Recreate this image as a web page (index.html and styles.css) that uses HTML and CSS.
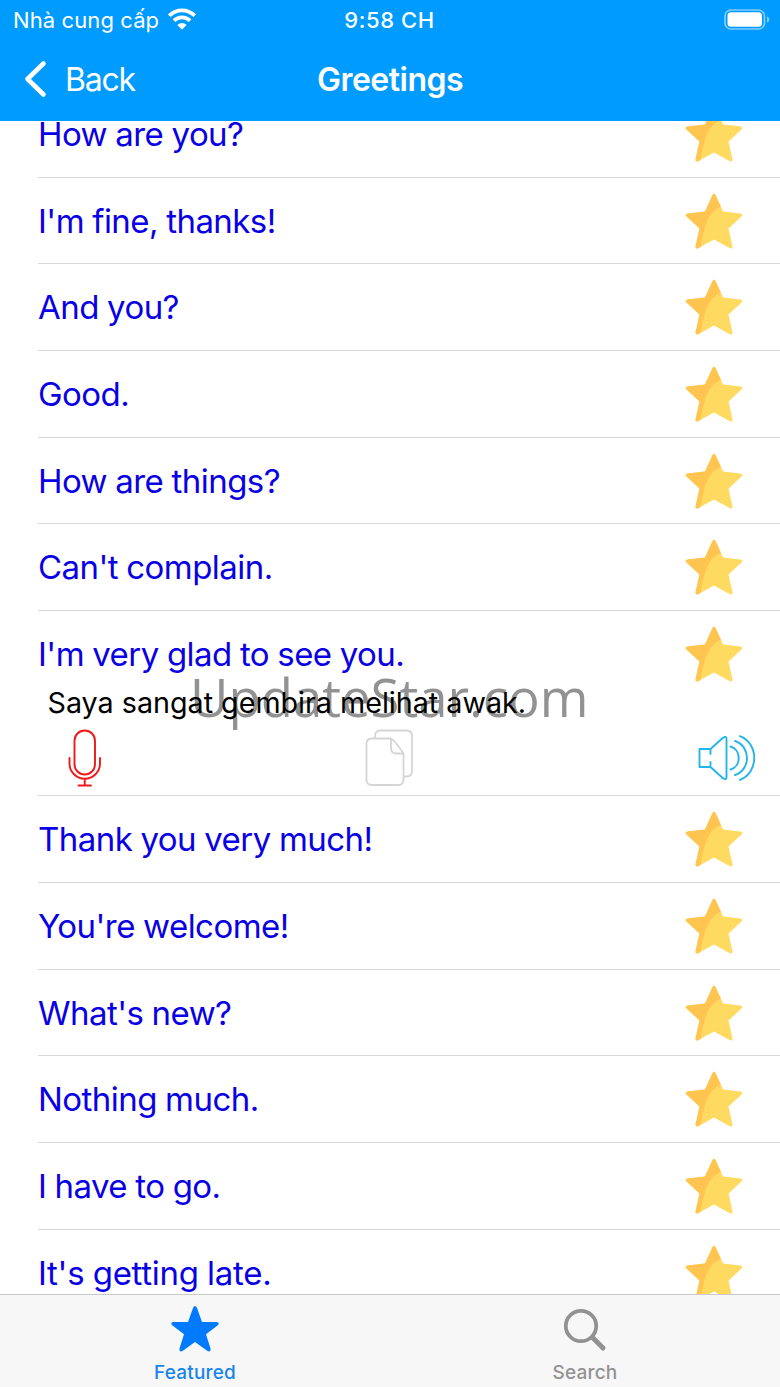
FILE: index.html
```html
<!DOCTYPE html>
<html lang="en">
<head>
  <meta charset="UTF-8" />
  <title>Greetings</title>
  <link rel="stylesheet" href="styles.css">
</head>
<body>
  <svg class="sprite" width="0" height="0">
    <symbol id="star" viewBox="0 0 58 56">
      <path fill="#ffda60" d="M27.500 2 Q29 -.5 30.500 2 L38 18.500 L55.500 20.500 Q58.500 21.500 56.500 23.500 L43.500 35.500 L47.500 53.500 Q47.500 56 45 55.200 L29 46.500 L13 55.200 Q10.500 56 10.500 53.500 L14.500 35.500 L1.500 23.500 Q-.5 21.500 2.500 20.500 L20 18.500 Z"/>
      <path fill="#ffc550" d="M27.500 2 Q29 -.5 30.500 2 L36 14 Q27 17 22 28 Q18.500 36 15.500 54 L13 55.200 Q10.500 56 10.500 53.500 L14.500 35.500 L1.500 23.500 Q-.5 21.500 2.500 20.500 L20 18.500 Z"/>
    </symbol>
  </svg>

  <header>
    <div class="status-bar">
      <div class="carrier">
        <span>Nhà cung cấp</span>
        <svg class="wifi" width="28" height="22" viewBox="0 0 28 22" fill="none" stroke="#fff" stroke-width="3.800">
          <path d="M1.300 7.700 C8.500 .6 19.500 .6 26.700 7.700"/>
          <path d="M5.900 12.700 C10.500 8.200 17.500 8.200 22.100 12.700"/>
          <path fill="#fff" stroke="none" d="M9.400 17 Q14 12.800 18.600 17 L14.700 20.900 Q14 21.500 13.300 20.900 Z"/>
        </svg>
      </div>
      <div class="time">9:58 CH</div>
      <svg class="battery" width="46" height="21" viewBox="0 0 46 21">
        <rect x="1" y="1" width="39.500" height="19" rx="6" fill="none" stroke="#fff" stroke-opacity=".5" stroke-width="1.700"/>
        <rect x="3.500" y="3.300" width="34.500" height="14.400" rx="3.500" fill="#fff"/>
        <path d="M43 7.200 Q45.300 8.300 45.300 10.500 Q45.300 12.700 43 13.800 Z" fill="#fff" fill-opacity=".5"/>
      </svg>
    </div>
    <nav>
      <a class="back">
        <svg width="24" height="38" viewBox="0 0 24 38" fill="none" stroke="#fff" stroke-width="4.600" stroke-linecap="round" stroke-linejoin="round">
          <path d="M19.500 3.500 L3.500 19 L19.500 34.500"/>
        </svg>
        <span>Back</span>
      </a>
      <h1>Greetings</h1>
    </nav>
  </header>

  <main class="list">
    <div class="row"><span class="phrase">How are you?</span><svg class="star"><use href="#star"/></svg></div>
    <div class="row"><span class="phrase">I'm fine, thanks!</span><svg class="star"><use href="#star"/></svg></div>
    <div class="row"><span class="phrase">And you?</span><svg class="star"><use href="#star"/></svg></div>
    <div class="row"><span class="phrase">Good.</span><svg class="star"><use href="#star"/></svg></div>
    <div class="row"><span class="phrase">How are things?</span><svg class="star"><use href="#star"/></svg></div>
    <div class="row"><span class="phrase">Can't complain.</span><svg class="star"><use href="#star"/></svg></div>
    <div class="item">
      <div class="row"><span class="phrase">I'm very glad to see you.</span><svg class="star"><use href="#star"/></svg></div>
      <div class="watermark">UpdateStar.com</div>
      <div class="translation">Saya sangat gembira melihat awak.</div>
      <div class="tools">
        <svg width="34" height="58" viewBox="0 0 34 58" fill="none" stroke="#f01818" stroke-width="1.900" stroke-linecap="round">
          <rect x="6.500" y="1.500" width="20.500" height="44" rx="10.250"/>
          <path d="M1.500 29 V34.500 A15.250 15.250 0 0 0 32 34.500 V29 M16.750 50 V56.500 M10.500 56.500 H23"/>
        </svg>
        <svg width="50" height="58" viewBox="0 0 50 58" fill="none" stroke="#d5d5d5" stroke-width="1.800" stroke-linejoin="round">
          <path d="M10 9.500 V7 Q10 1.500 15.500 1.500 H41.500 Q47 1.500 47 7 V42 Q47 47.500 41.500 47.500 H39"/>
          <path d="M7 9.500 H26 Q29 10.500 38.500 24.500 V50.500 Q38.500 56 33 56 H7 Q1.500 56 1.500 50.500 V15 Q1.500 9.500 7 9.500 Z"/>
          <path d="M26 9.500 V19 Q26 24.500 31.500 24.500 H38.500"/>
        </svg>
        <svg width="58" height="46" viewBox="0 0 58 46" fill="none" stroke="#22b5ea" stroke-width="1.900" stroke-linecap="round" stroke-linejoin="round">
          <path d="M12.500 19 V14 H1.500 V32 H12.500 V27 M12.500 14 L25 2.800 Q28.500 .5 28.500 4 V42 Q28.500 45.500 25 43.200 L12.500 32"/>
          <path d="M32.500 11.500 C43.500 14.500 43.500 31.500 32.500 34.500"/>
          <path d="M37 6 C53 11.500 53 34.500 37 40"/>
          <path d="M42 1.200 C61 8.500 61 37.500 42 44.800"/>
        </svg>
      </div>
    </div>
    <div class="row"><span class="phrase">Thank you very much!</span><svg class="star"><use href="#star"/></svg></div>
    <div class="row"><span class="phrase">You're welcome!</span><svg class="star"><use href="#star"/></svg></div>
    <div class="row"><span class="phrase">What's new?</span><svg class="star"><use href="#star"/></svg></div>
    <div class="row"><span class="phrase">Nothing much.</span><svg class="star"><use href="#star"/></svg></div>
    <div class="row"><span class="phrase">I have to go.</span><svg class="star"><use href="#star"/></svg></div>
    <div class="row"><span class="phrase loose">It's getting late.</span><svg class="star"><use href="#star"/></svg></div>
  </main>

  <footer>
    <a class="tab active">
      <svg width="50" height="48" viewBox="0 0 50 48" fill="#007aff">
        <path d="M23 3 Q25 -.8 27 3 L32 17 H46.500 Q50.500 17.500 47.500 20.500 L36 29.200 L40.500 43.500 Q41 47.500 37.500 46 L25 37 L12.500 46 Q9 47.500 9.500 43.500 L14 29.200 L2.500 20.500 Q-.5 17.500 3.500 17 H18 Z"/>
      </svg>
      <span>Featured</span>
    </a>
    <a class="tab">
      <svg class="search" width="44" height="44" viewBox="0 0 44 44" fill="none" stroke="#929292" stroke-linecap="round">
        <circle cx="18" cy="18" r="15.200" stroke-width="3.800"/>
        <path d="M29.500 29.500 L40 40" stroke-width="5"/>
      </svg>
      <span>Search</span>
    </a>
  </footer>
</body>
</html>
```

FILE: styles.css
```css
body {
  margin: 0;
  width: 780px;
  height: 1387px;
  display: flex;
  flex-direction: column;
  overflow: hidden;
  background: #fff;
  font-family: Inter, "Liberation Sans", sans-serif;
}
.sprite {
  position: absolute;
}
svg {
  display: block;
  flex: none;
}
header {
  height: 121px;
  flex: none;
  background: #009bff;
  color: #fff;
}
.status-bar {
  display: grid;
  grid-template-columns: 1fr auto 1fr;
  align-items: center;
  height: 39px;
  padding: 0 10px 0 13px;
  font-size: 22px;
}
.carrier {
  display: flex;
  align-items: center;
  gap: 9px;
  letter-spacing: 0.1px;
}
.wifi {
  margin-bottom: 2px;
}
.time {
  font-weight: 500;
  letter-spacing: 0.6px;
  margin-right: 4px;
}
.battery {
  justify-self: end;
}
nav {
  display: grid;
  grid-template-columns: 1fr auto 1fr;
  align-items: center;
  height: 80px;
  padding: 0 24px;
}
.back {
  display: flex;
  align-items: center;
  gap: 17px;
  font-size: 32px;
  letter-spacing: -1.2px;
}
h1 {
  margin: 0;
  font-size: 32px;
  font-weight: 600;
  letter-spacing: -0.5px;
}
.list {
  height: 1173px;
  flex: none;
  overflow: hidden;
}
.row {
  display: flex;
  justify-content: space-between;
  box-sizing: border-box;
  height: 86.700px;
  margin-left: 38px;
  padding: 15px 37px 0 0;
  border-bottom: 1px solid #d8d8d8;
}
.list > .row:first-child {
  margin-top: -30px;
}
.phrase {
  font-size: 33px;
  line-height: 56px;
  letter-spacing: -0.550px;
  word-spacing: -0.500px;
  color: #0a00e6;
  white-space: nowrap;
}
.phrase.loose {
  letter-spacing: -0.300px;
}
.star {
  width: 58px;
  height: 56px;
}
.item {
  position: relative;
  box-sizing: border-box;
  height: 185.200px;
}
.item::after {
  content: "";
  display: block;
  margin-left: 38px;
  border-bottom: 1px solid #d8d8d8;
}
.item .row {
  height: 72px;
  border-bottom: none;
}
.watermark {
  position: absolute;
  left: 190px;
  top: 49px;
  font-family: "Open Sans", "Noto Sans", sans-serif;
  font-size: 52.700px;
  line-height: 74px;
  color: #929292;
}
.translation {
  position: relative;
  height: 46px;
  padding-left: 47.500px;
  font-size: 28.700px;
  line-height: 40px;
  color: #000;
}
.tools {
  display: flex;
  justify-content: space-between;
  align-items: center;
  height: 66px;
  padding: 0 24px 8px 68px;
  box-sizing: border-box;
}
.tools svg:nth-child(2) {
  margin-right: 20px;
}
footer {
  display: grid;
  grid-template-columns: 1fr 1fr;
  flex: 1;
  background: #f7f7f7;
  border-top: 1px solid #c9c9cb;
}
.tab {
  display: flex;
  flex-direction: column;
  align-items: center;
  justify-content: space-between;
  padding: 10px 0 2px;
  font-size: 19px;
  line-height: 24px;
  font-weight: 500;
  letter-spacing: 0.200px;
  color: #929292;
}
.tab.active {
  color: #1a84ee;
}
.search {
  margin-top: 3px;
}
```
